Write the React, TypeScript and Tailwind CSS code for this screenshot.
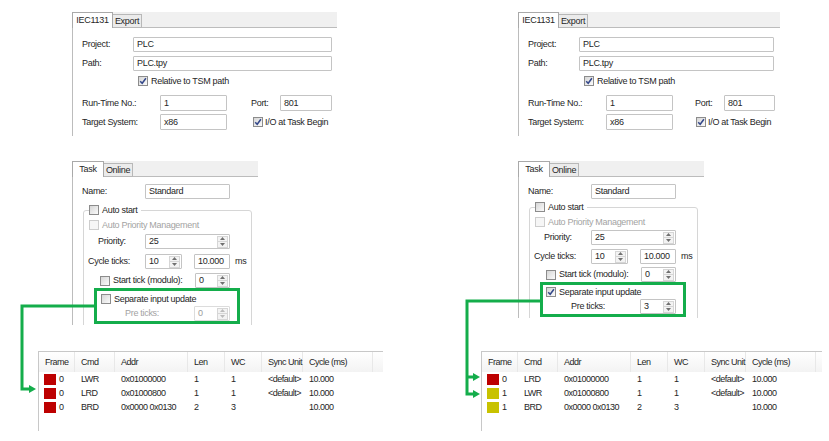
import React from "react";

type FieldProps = { className: string; children?: React.ReactNode; spin?: boolean; disabled?: boolean };

function Check({ checked = false, disabled = false }: { checked?: boolean; disabled?: boolean }) {
  return (
    <span
      className={`relative block w-[10px] h-[10px] shrink-0 border ${
        disabled ? "border-[#cdcdcd] bg-[#f6f6f6]" : "border-[#8c8c8c] bg-gradient-to-br from-[#d6d6d6] to-[#fbfbfb]"
      }`}
    >
      {checked && (
        <svg viewBox="0 0 8 8" className="absolute left-0 top-0 w-[8px] h-[8px]">
          <path d="M1.2 4.2 L3.2 6.3 L6.9 1.3" stroke="#34488a" strokeWidth="1.5" fill="none" />
        </svg>
      )}
    </span>
  );
}

function Spin({ disabled }: { disabled?: boolean }) {
  const c = disabled ? "#bcbcbc" : "#707070";
  return (
    <div className="ml-auto mr-[1px] h-[12px] w-[11px] flex flex-col border border-[#d6d6d6] bg-[#f3f3f3]">
      <div className="flex-1 flex items-center justify-center border-b border-[#d6d6d6]">
        <svg width="5" height="3" viewBox="0 0 5 3">
          <path d="M0 3 L2.5 0 L5 3Z" fill={c} />
        </svg>
      </div>
      <div className="flex-1 flex items-center justify-center">
        <svg width="5" height="3" viewBox="0 0 5 3">
          <path d="M0 0 L2.5 3 L5 0Z" fill={c} />
        </svg>
      </div>
    </div>
  );
}

function Field({ className, children, spin, disabled }: FieldProps) {
  return (
    <div
      className={`flex items-center shrink-0 bg-white border rounded-[1px] ${
        disabled ? "border-[#dcdcdc] text-[#9c9c9c]" : "border-[#c4c4c4] text-[#262626]"
      } ${className}`}
    >
      <span className="pl-[3px]">{children}</span>
      {spin && <Spin disabled={disabled} />}
    </div>
  );
}

function TabStrip({ first, second, w1, w2 }: { first: string; second: string; w1: string; w2: string }) {
  return (
    <div className="flex h-[16px] bg-[#f0f0f0]">
      <div className={`${w1} h-full bg-white border border-b-0 border-[#a9a9a9] flex items-center justify-center`}>{first}</div>
      <div
        className={`${w2} h-[14px] mt-[2px] border-t border-r border-b border-[#b8b8b8] bg-[#ebebeb] flex items-center justify-center`}
      >
        {second}
      </div>
      <div className="flex-1 border-b border-[#bcbcbc]" />
    </div>
  );
}

function TopPanel({ right }: { right: boolean }) {
  return (
    <div className={`mt-[12px] ${right ? "ml-[71px] w-[262px]" : "ml-[72px] w-[265px]"}`}>
      <TabStrip first="IEC1131" second="Export" w1="w-[41px]" w2="w-[29px]" />
      <div className="border-l border-[#bcbcbc] pl-[9px] pt-[9px] pb-[6px]">
        <div className="flex items-center h-[15px]">
          <span className="w-[51px] shrink-0">Project:</span>
          <Field className={`${right ? "w-[195px]" : "w-[199px]"} h-[15px]`}>PLC</Field>
        </div>
        <div className="flex items-center h-[15px] mt-[4px]">
          <span className="w-[51px] shrink-0">Path:</span>
          <Field className={`${right ? "w-[195px]" : "w-[199px]"} h-[15px]`}>PLC.tpy</Field>
        </div>
        <div className="flex items-center h-[10px] mt-[5px] ml-[56px] gap-[3px]">
          <Check checked />
          <span>Relative to TSM path</span>
        </div>
        <div className="flex items-center h-[16px] mt-[9px]">
          <span className="w-[78px] shrink-0">Run-Time No.:</span>
          <Field className="w-[67px] h-[16px]">1</Field>
          <span className={`${right ? "ml-[22px]" : "ml-[24px]"} w-[29px] shrink-0`}>Port:</span>
          <Field className={`${right ? "w-[51px]" : "w-[52px]"} h-[16px]`}>801</Field>
        </div>
        <div className="flex items-center h-[16px] mt-[3px]">
          <span className="w-[78px] shrink-0">Target System:</span>
          <Field className="w-[67px] h-[16px]">x86</Field>
          <span className={`${right ? "ml-[23px]" : "ml-[26px]"} flex items-center gap-[2px]`}>
            <Check checked />
            <span>I/O at Task Begin</span>
          </span>
        </div>
      </div>
    </div>
  );
}

function TaskPanel({ right }: { right: boolean }) {
  return (
    <div className={`mt-[25px] w-[186px] ${right ? "ml-[71px]" : "ml-[72px]"}`}>
      <TabStrip first="Task" second="Online" w1="w-[32px]" w2="w-[29px]" />
      <div className={`border-l border-[#bcbcbc] pl-[9px] pt-[7px] overflow-hidden ${right ? "h-[141px]" : "h-[148px]"}`}>
        <div className="flex items-center h-[15px]">
          <span className="w-[63px] shrink-0">Name:</span>
          <Field className="w-[85px] h-[15px]">Standard</Field>
        </div>
        <div className={`ml-[1px] w-[169px] h-[200px] border border-[#d6d6d6] rounded-[3px] ${right ? "mt-[8px]" : "mt-[11px]"}`}>
          <div className="-mt-[6px] ml-[5px] h-[10px] flex items-center">
            <span className="flex items-center gap-[3px] bg-white pr-[3px]">
              <Check />
              <span>Auto start</span>
            </span>
          </div>
          <div className="mt-[5px] ml-[5px] h-[10px] flex items-center gap-[3px] text-[#a3a3a3]">
            <Check disabled />
            <span>Auto Priority Management</span>
          </div>
          <div className={`${right ? "mt-[3px]" : "mt-[4px]"} flex items-center h-[15px]`}>
            <span className="ml-[14px] w-[47px] shrink-0">Priority:</span>
            <Field className="w-[85px] h-[15px]" spin>
              25
            </Field>
          </div>
          <div className={`${right ? "mt-[4px]" : "mt-[5px]"} flex items-center h-[15px]`}>
            <span className="ml-[4px] w-[57px] shrink-0">Cycle ticks:</span>
            <Field className="w-[37px] h-[15px]" spin>
              10
            </Field>
            <Field className="ml-[12px] w-[36px] h-[15px]">10.000</Field>
            <span className="ml-[5px]">ms</span>
          </div>
          <div className={`${right ? "mt-[3px]" : "mt-[4px]"} flex items-center h-[15px]`}>
            <span className="ml-[16px] flex items-center gap-[3px] w-[95px] shrink-0">
              <Check />
              <span>Start tick (modulo):</span>
            </span>
            <Field className="w-[35px] h-[15px]" spin>
              0
            </Field>
          </div>
          <div className={`ml-[10px] w-[146px] border-[3px] border-[#14ad4b] ${right ? "h-[35px]" : "h-[36px]"}`}>
            <div className={`${right ? "mt-[2px] ml-[3px]" : "mt-[3px] ml-[4px]"} h-[10px] flex items-center gap-[3px]`}>
              <Check checked={right} />
              <span>Separate input update</span>
            </div>
            <div className="mt-[2px] flex items-center h-[15px]">
              <span className={`ml-[28px] w-[69px] shrink-0 ${right ? "text-[#262626]" : "text-[#a3a3a3]"}`}>Pre ticks:</span>
              <Field className="w-[36px] h-[15px]" spin disabled={!right}>
                {right ? "3" : "0"}
              </Field>
            </div>
          </div>
        </div>
      </div>
    </div>
  );
}

type Row = { color: string; frame: string; cmd: string; addr: string; len: string; wc: string; sync: string; cycle: string };

function FrameTable({ right, rows }: { right: boolean; rows: Row[] }) {
  const cols = ["w-[36px]", "w-[40px]", "w-[73px]", "w-[37px]", "w-[37px]", "w-[41px]", "w-[70px]"];
  const heads = ["Frame", "Cmd", "Addr", "Len", "WC", "Sync Unit", "Cycle (ms)"];
  return (
    <div
      className={`border-l border-t border-[#c8c8c8] h-[80px] tracking-[-0.5px] ${
        right ? "mt-[33px] ml-[34px] w-[341px]" : "mt-[26px] ml-[38px] w-[345px]"
      }`}
    >
      <div className="flex h-[20px] bg-gradient-to-b from-white to-[#f3f3f3]">
        {heads.map((h, i) => (
          <div key={h} className={`${cols[i]} shrink-0 h-full flex items-center pl-[6px] border-r border-[#e8e8e8]`}>
            {h}
          </div>
        ))}
      </div>
      {rows.map((r, ri) => (
        <div key={ri} className="flex h-[14px] items-center">
          <div className={`${cols[0]} shrink-0 flex items-center gap-[3px] pl-[5px]`}>
            <span className={`block w-[12px] h-[11px] ${r.color}`} />
            <span>{r.frame}</span>
          </div>
          <div className={`${cols[1]} shrink-0 pl-[6px]`}>{r.cmd}</div>
          <div className={`${cols[2]} shrink-0 pl-[6px]`}>{r.addr}</div>
          <div className={`${cols[3]} shrink-0 pl-[6px]`}>{r.len}</div>
          <div className={`${cols[4]} shrink-0 pl-[6px]`}>{r.wc}</div>
          <div className={`${cols[5]} shrink-0 pl-[6px]`}>{r.sync}</div>
          <div className={`${cols[6]} shrink-0 pl-[6px]`}>{r.cycle}</div>
        </div>
      ))}
    </div>
  );
}

const RED = "bg-[#bd0000]";
const YEL = "bg-[#c8c200]";

const leftRows: Row[] = [
  { color: RED, frame: "0", cmd: "LWR", addr: "0x01000000", len: "1", wc: "1", sync: "<default>", cycle: "10.000" },
  { color: RED, frame: "0", cmd: "LRD", addr: "0x01000800", len: "1", wc: "1", sync: "<default>", cycle: "10.000" },
  { color: RED, frame: "0", cmd: "BRD", addr: "0x0000 0x0130", len: "2", wc: "3", sync: "", cycle: "10.000" },
];

const rightRows: Row[] = [
  { color: RED, frame: "0", cmd: "LRD", addr: "0x01000000", len: "1", wc: "1", sync: "<default>", cycle: "10.000" },
  { color: YEL, frame: "1", cmd: "LWR", addr: "0x01000800", len: "1", wc: "1", sync: "<default>", cycle: "10.000" },
  { color: YEL, frame: "1", cmd: "BRD", addr: "0x0000 0x0130", len: "2", wc: "3", sync: "", cycle: "10.000" },
];

function Half({ right }: { right: boolean }) {
  return (
    <div className={`shrink-0 flex flex-col ${right ? "w-[382px]" : "w-[447px]"}`}>
      <TopPanel right={right} />
      <TaskPanel right={right} />
      <FrameTable right={right} rows={right ? rightRows : leftRows} />
    </div>
  );
}

export default function App() {
  const G = "#14ad4b";
  return (
    <div className="relative w-[829px] h-[441px] bg-white overflow-hidden flex whitespace-nowrap font-['Liberation_Sans',Arial,sans-serif] text-[9px] tracking-[-0.3px] leading-none text-[#262626]">
      <Half right={false} />
      <Half right />
      <svg className="absolute left-0 top-0 pointer-events-none" width="829" height="441" viewBox="0 0 829 441">
        <polyline points="94,306 22,306 22,389 30,389" fill="none" stroke={G} strokeWidth="3" />
        <polygon points="29,385 36,389 29,393" fill={G} />
        <polyline points="540,301 467,301 467,394 474,394" fill="none" stroke={G} strokeWidth="3" />
        <polyline points="467,377 474,377" fill="none" stroke={G} strokeWidth="3" />
        <polygon points="473,373 480,377 473,381" fill={G} />
        <polygon points="473,390 480,394 473,398" fill={G} />
      </svg>
    </div>
  );
}
